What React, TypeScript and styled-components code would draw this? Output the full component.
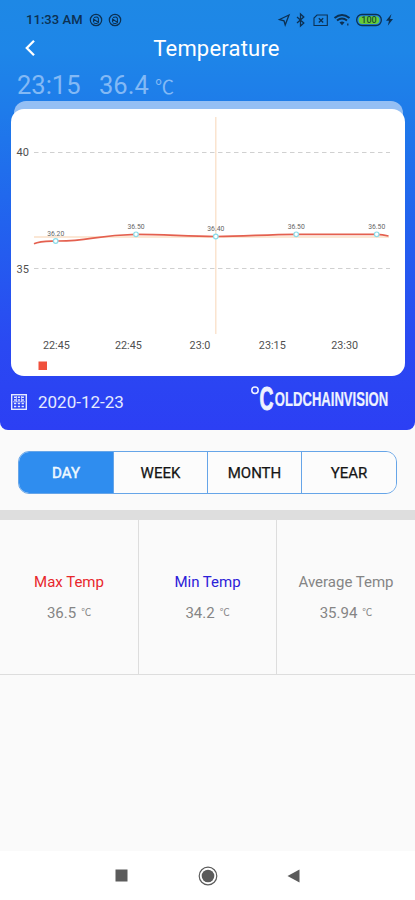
import React from "react";
import styled, { createGlobalStyle } from "styled-components";

const GlobalStyle = createGlobalStyle`
  *, *::before, *::after { box-sizing: border-box; }
  html, body { margin: 0; padding: 0; }
  body { background: #fafafa; font-family: Roboto, "Noto Sans CJK SC", sans-serif; }
`;

const Screen = styled.div`
  width: 415px;
  height: 900px;
  display: flex;
  flex-direction: column;
  overflow: hidden;
  background: #fafafa;
`;

const Hero = styled.header`
  height: 430px;
  flex: none;
  display: flex;
  flex-direction: column;
  border-radius: 0 0 8px 8px;
  background: linear-gradient(180deg, #1e88e5 0%, #1e86e8 12%, #1e7bea 26%, #2262ee 52%, #2a49f2 80%, #2c3ff4 100%);
`;

const StatusBar = styled.div`
  height: 33px;
  padding: 6px 20px 0 26px;
  display: flex;
  align-items: center;
  justify-content: space-between;
  color: #0c3052;
`;

const StatusGroup = styled.div<{ $gap: number }>`
  display: flex;
  align-items: center;
  gap: ${(p) => p.$gap}px;
`;

const Clock = styled.span`
  font-size: 13px;
  line-height: 16px;
  font-weight: 500;
  letter-spacing: 0.05px;
  margin-right: 1px;
  white-space: nowrap;
`;

const TitleBar = styled.div`
  height: 32px;
  display: grid;
  grid-template-columns: 48px 1fr 48px;
  align-items: center;
  padding-left: 1px;
  color: #fff;
`;

const BackButton = styled.button`
  border: 0;
  padding: 0 0 3px 23px;
  background: none;
  color: inherit;
  display: flex;
`;

const Title = styled.h1`
  margin: 0;
  padding-left: 17px;
  text-align: center;
  font-size: 22px;
  line-height: 32px;
  font-weight: 400;
  letter-spacing: 0.2px;
`;

const Reading = styled.div`
  height: 36px;
  padding: 5px 0 0 17px;
  display: flex;
  align-items: baseline;
  font-size: 25.5px;
  line-height: 30px;
  color: #83b9f5;
`;

const ReadingTime = styled.span`
  width: 82px;
`;

const ReadingValue = styled.span`
  width: 56px;
`;

const ReadingUnit = styled.span`
  font-size: 19px;
  line-height: 20px;
`;

const CardBack = styled.div`
  margin: 0 12px 0 14px;
  height: 30px;
  flex: none;
  border-radius: 12px 12px 0 0;
  background: #94bff4;
`;

const ChartCard = styled.section`
  margin: -22px 10px 1px 11px;
  height: 267px;
  flex: none;
  border-radius: 13px;
  background: #fff;
  overflow: hidden;

  svg { display: block; }
`;

const HeroFooter = styled.div`
  flex: 1;
  display: flex;
  justify-content: space-between;
  padding: 6px 25px 0 11px;
  color: #e4eaff;
`;

const DateLabel = styled.div`
  display: flex;
  align-items: center;
  height: 37px;
  gap: 11px;
  font-size: 17px;
`;

const TabsArea = styled.div`
  height: 80px;
  flex: none;
  padding: 21px 18px 0;
`;

const Tabs = styled.div`
  height: 43px;
  display: grid;
  grid-template-columns: 95px 94px 94px 1fr;
  border: 1px solid #66a5e8;
  border-radius: 11px;
  overflow: hidden;
`;

const Tab = styled.button<{ $active?: boolean }>`
  border: 0;
  border-right: 1px solid #66a5e8;
  padding: 1px 0 0;
  font: 400 15px/20px Roboto, sans-serif;
  -webkit-text-stroke: ${(p) => (p.$active ? "0.5px" : "0.25px")} currentColor;
  color: ${(p) => (p.$active ? "#eef8ff" : "#151515")};
  background: ${(p) => (p.$active ? "#2f8def" : "#fcfcfc")};

  &:last-child { border-right: 0; }
`;

const Divider = styled.div`
  height: 10px;
  flex: none;
  background: #dedede;
`;

const Stats = styled.section`
  height: 155px;
  flex: none;
  display: grid;
  grid-template-columns: 139px 138px 138px;
  border-bottom: 1px solid #dddddd;
`;

const Stat = styled.div`
  display: flex;
  flex-direction: column;
  align-items: center;
  padding-top: 52px;
  border-right: 1px solid #dddddd;

  &:last-child { border-right: 0; }
`;

const StatName = styled.div<{ $color: string }>`
  color: ${(p) => p.$color};
  font-size: 15px;
  line-height: 20px;
`;

const StatValue = styled.div`
  margin-top: 11px;
  display: flex;
  align-items: center;
  gap: 5px;
  font-size: 15px;
  line-height: 20px;
  color: #858585;
`;

const StatUnit = styled.span`
  font-size: 10px;
`;

const Spacer = styled.div`
  flex: 1;
`;

const NavBar = styled.nav`
  height: 49px;
  flex: none;
  display: flex;
  justify-content: space-between;
  align-items: center;
  padding: 0 115px 0 115px;
  background: #fff;
  color: #5b5b5b;
`;

const LogoSvg = styled.svg`
  overflow: visible;
`;

const NfcIcon = () => (
  <svg width="14" height="14" viewBox="0 0 14 14" fill="none" stroke="currentColor" strokeWidth="1.2">
    <circle cx="7" cy="7" r="5.7" />
    <path d="M4.600 9V6l4.800 3.500V5.500M5 4.500q4-1.300 4.400 1M4.600 9.500q1.400 1.600 4 .8" strokeWidth="1.100" />
  </svg>
);

const StatusIcons = () => (
  <svg width="118" height="16" viewBox="277 11.5 118 16" fill="none" stroke="currentColor" strokeWidth="1.3">
    <path d="M289 14.5 279.500 19l4.500 1.300 1.200 4.200z" />
    <path d="m297 16.500 6.800 6-3.300 3V13.500l3.300 3-6.800 6" />
    <path d="M317 14.500h10.300v10.500h-13.300v-7.500z" strokeWidth="1.100" />
    <path d="m318.800 17.800 4.400 4.200m0-4.200-4.400 4.200" />
    <path d="M334.500 17.500q7.500-6 15 0M337 20q5-4 10 0" strokeWidth="2" />
    <path d="m339.500 22 2.500 2.700 2.500-2.700q-2.500-2-5 0z" fill="currentColor" stroke="none" />
    <path d="M347.800 23v2" />
    <rect x="356.700" y="14" width="24.600" height="11" rx="5.200" />
    <rect x="358.700" y="15.800" width="20.600" height="7.600" rx="3.600" fill="#67cc38" stroke="none" />
    <text x="369" y="22.900" textAnchor="middle" fontFamily="Roboto" fontSize="9" fontWeight="500" fill="#174e30" stroke="none">100</text>
    <path d="m391.500 13.500-5.500 6.700h3l-1.200 5 5.200-6.700h-3z" fill="currentColor" stroke="none" />
  </svg>
);

const BackIcon = () => (
  <svg width="12" height="18" viewBox="0 0 12 18" fill="none" stroke="currentColor" strokeWidth="2.300">
    <path d="M10 1.800 2.800 9l7.200 7.200" />
  </svg>
);

const CalendarIcon = () => (
  <svg width="16" height="16" viewBox="0 0 16 16" fill="none" stroke="currentColor">
    <rect x=".7" y=".7" width="14.600" height="14.600" strokeWidth="1.400" />
    <path d="M3 3.200h10M3 6h10M3 9.500h10M3 12.500h10" strokeWidth="1.400" strokeDasharray="2.300 1.500" />
    <path d="M2 7.800h12M5.500 2v6M10.500 2v6" strokeWidth=".7" />
  </svg>
);

const Logo = () => (
  <LogoSvg width="140" height="36" viewBox="250 383 140 36" fill="#eef2ff">
    <circle cx="255" cy="390.200" r="3.200" fill="none" stroke="#eef2ff" strokeWidth="1.500" />
    <g fontFamily="Liberation Sans" fontWeight="700" stroke="#eef2ff">
      <text transform="translate(259.600 410.300) scale(.588 1)" fontSize="33" strokeWidth=".9">C</text>
      <text transform="translate(274.800 405.800) scale(.655 1)" fontSize="20" strokeWidth=".2">OLDCHAINVISION</text>
    </g>
  </LogoSvg>
);

const points = [
  { x: 55.7, y: 241, label: "36.20" },
  { x: 136, y: 234.3, label: "36.50" },
  { x: 215.8, y: 236.5, label: "36.40" },
  { x: 296.2, y: 234.3, label: "36.50" },
  { x: 376.7, y: 234.3, label: "36.50" },
];

const times = [
  { x: 56.4, label: "22:45" },
  { x: 128.4, label: "22:45" },
  { x: 200, label: "23:0" },
  { x: 272.3, label: "23:15" },
  { x: 344.6, label: "23:30" },
];

const Chart = () => (
  <svg width="394" height="267" viewBox="11 109 394 267" fontFamily="Roboto">
    <g stroke="#d0d0d0" strokeWidth="1.200" strokeDasharray="4.500 3.500">
      <path d="M34 152.500H390M34 268.500H390" />
    </g>
    <g fill="#505050" fontSize="11">
      <text x="16.500" y="156">40</text>
      <text x="16.500" y="272.500">35</text>
    </g>
    <path d="M215.800 117V334M34 237H389" fill="none" stroke="#fae0c8" strokeWidth="1.300" />
    <path
      d="M34 243.800C40 241 48 241.300 55.700 241C90 241.500 94 235 136 234.300C164 234.300 188 236.500 215.800 236.500C245 236.500 266 234.300 296.200 234.300H376.700C382 234.300 385 235 388.500 236"
      fill="none"
      stroke="#e4604f"
      strokeWidth="1.700"
    />
    {points.map((p) => (
      <g key={p.x}>
        <circle cx={p.x} cy={p.y} r="2.300" fill="#fff" stroke="#8bdcea" strokeWidth="1.200" />
        <text x={p.x} y={p.y - 5.3} textAnchor="middle" fontSize="6.800" fill="#666">{p.label}</text>
      </g>
    ))}
    <g fill="#505050" fontSize="10.800" textAnchor="middle">
      {times.map((t) => (
        <text key={t.x} x={t.x} y="349">{t.label}</text>
      ))}
    </g>
    <rect x="38.500" y="361.500" width="8.500" height="8.500" fill="#f0503c" />
  </svg>
);

const stats = [
  { name: "Max Temp", value: "36.5", color: "#e8272c" },
  { name: "Min Temp", value: "34.2", color: "#2c20d8" },
  { name: "Average Temp", value: "35.94", color: "#858585" },
];

export default function App() {
  return (
    <>
      <GlobalStyle />
      <Screen>
        <Hero>
          <StatusBar>
            <StatusGroup $gap={5}>
              <Clock>11:33 AM</Clock>
              <NfcIcon />
              <NfcIcon />
            </StatusGroup>
            <StatusIcons />
          </StatusBar>
          <TitleBar>
            <BackButton aria-label="Back"><BackIcon /></BackButton>
            <Title>Temperature</Title>
          </TitleBar>
          <Reading>
            <ReadingTime>23:15</ReadingTime>
            <ReadingValue>36.4</ReadingValue>
            <ReadingUnit>℃</ReadingUnit>
          </Reading>
          <CardBack />
          <ChartCard><Chart /></ChartCard>
          <HeroFooter>
            <DateLabel>
              <CalendarIcon />
              2020-12-23
            </DateLabel>
            <Logo />
          </HeroFooter>
        </Hero>
        <TabsArea>
          <Tabs>
            <Tab $active>DAY</Tab>
            <Tab>WEEK</Tab>
            <Tab>MONTH</Tab>
            <Tab>YEAR</Tab>
          </Tabs>
        </TabsArea>
        <Divider />
        <Stats>
          {stats.map((s) => (
            <Stat key={s.name}>
              <StatName $color={s.color}>{s.name}</StatName>
              <StatValue>
                {s.value}
                <StatUnit>℃</StatUnit>
              </StatValue>
            </Stat>
          ))}
        </Stats>
        <Spacer />
        <NavBar>
          <svg width="13" height="13" viewBox="0 0 13 13" fill="currentColor">
            <rect x=".5" y=".5" width="12" height="12" />
          </svg>
          <svg width="20" height="20" viewBox="0 0 20 20" fill="currentColor">
            <circle cx="10" cy="10" r="8.800" fill="none" stroke="currentColor" strokeWidth="1.200" />
            <circle cx="10" cy="10" r="6.300" />
          </svg>
          <svg width="13" height="14" viewBox="0 0 13 14" fill="currentColor">
            <path d="M12.500.5v13L.5 7z" />
          </svg>
        </NavBar>
      </Screen>
    </>
  );
}
